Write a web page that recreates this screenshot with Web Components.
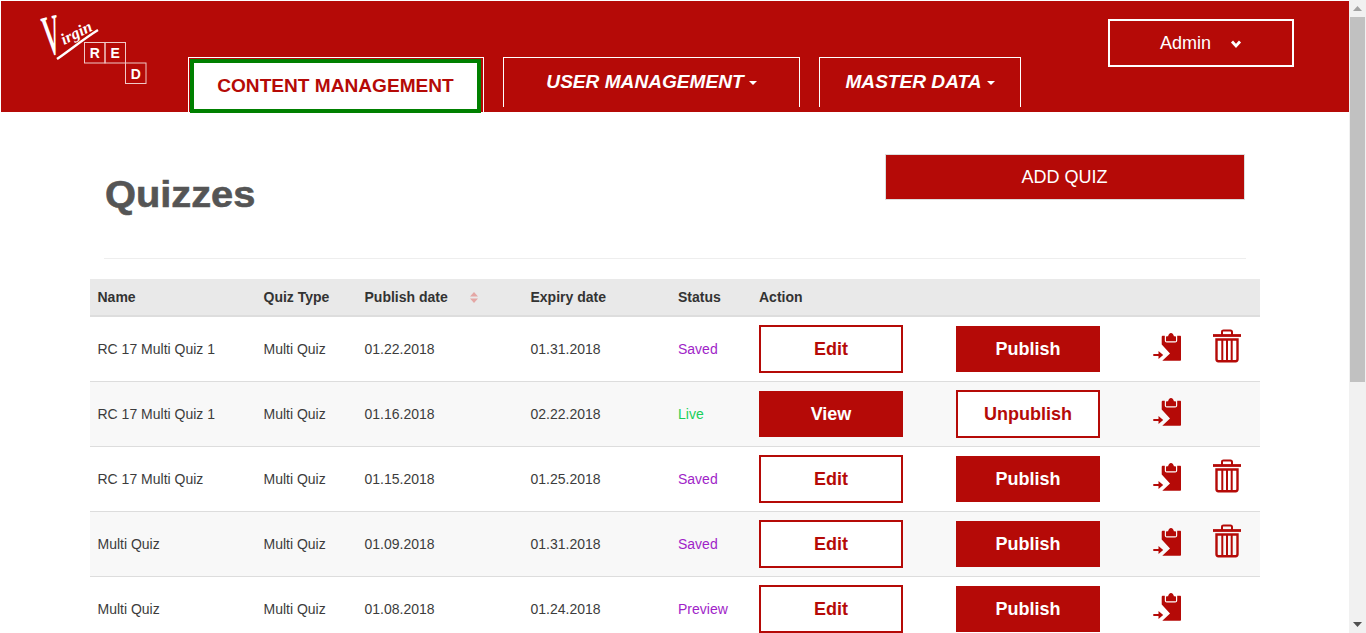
<!DOCTYPE html>
<html lang="en">
<head>
<meta charset="utf-8">
<title>Quizzes</title>
<style>
  html, body { margin: 0; height: 633px; overflow: hidden; background: #fff; }
  body { display: flex; font-family: "Liberation Sans", Arial, sans-serif; }
</style>
</head>
<body>
<app-shell>
  <app-header></app-header>
  <quiz-page></quiz-page>
</app-shell>
<fake-scrollbar></fake-scrollbar>

<script>
const RED = '#b50a07';

// Icons used by the rows
const ICON_CLIPBOARD = `
<svg xmlns="http://www.w3.org/2000/svg" width="30" height="32" viewBox="0 0 30 32" aria-hidden="true">
  <path fill="${RED}" d="M11 3.800h1.800V8.500c0 1.200.8 2 2 2h8.400c1.200 0 2-.8 2-2V3.800H28c.6 0 1 .4 1 1v23c0 .6-.4 1-1 1H10.300L18 21.500 9.700 12.500V5c0-.7.5-1.200 1.300-1.200z"/>
  <path fill="${RED}" d="M14 9.300V5.300c0-.6.4-1 1-1h1.100C16.400 2.300 17.600 1 19 1s2.600 1.300 2.900 3.300H23c.6 0 1 .4 1 1v4z"/>
  <path fill="${RED}" d="M1.300 22h5.200v-3l4.700 4-4.700 4v-3H1.300z"/>
</svg>`;

const ICON_TRASH = `
<svg xmlns="http://www.w3.org/2000/svg" width="28" height="34" viewBox="0 0 28 34" aria-hidden="true">
  <g fill="none" stroke="${RED}">
    <path stroke-width="2" d="M9 6V3c0-1 .6-1.600 1.600-1.600h6.800c1 0 1.600.6 1.600 1.600v3"/>
    <path stroke-width="2.800" d="M0 6.500h28"/>
    <path stroke-width="2.400" d="M3.500 10.500v19.800c0 1.200.7 1.900 1.900 1.900h17.200c1.200 0 1.900-.7 1.900-1.900V10.500z"/>
    <path stroke-width="2" d="M9.300 11v20M14 11v20M18.700 11v20"/>
  </g>
</svg>`;

class AppShell extends HTMLElement {
  constructor() {
    super();
    this.attachShadow({ mode: 'open' });
    this.shadowRoot.innerHTML = `
      <style>
        :host { display: block; width: 1349px; flex: none; }
      </style>
      <slot></slot>`;
  }
}

class FakeScrollbar extends HTMLElement {
  constructor() {
    super();
    this.attachShadow({ mode: 'open' });
    this.shadowRoot.innerHTML = `
      <style>
        :host { display: flex; flex-direction: column; width: 17px; height: 633px; flex: none; background: #f1f1f1; }
        .arrow { height: 17px; display: flex; align-items: center; justify-content: center; flex: none; }
        .thumb { height: 365px; margin-left: 1px; width: 15px; background: #c1c1c1; flex: none; }
        .track { flex: 1; }
      </style>
      <div class="arrow"><svg width="9" height="5" viewBox="0 0 9 5"><path d="M4.500 0L9 5H0z" fill="#a3a3a3"/></svg></div>
      <div class="thumb"></div>
      <div class="track"></div>
      <div class="arrow"><svg width="9" height="5" viewBox="0 0 9 5"><path d="M0 0h9L4.500 5z" fill="#505050"/></svg></div>`;
  }
}

// viewBox follows page coordinates, so the marks can be read off the screenshot
class VirginLogo extends HTMLElement {
  constructor() {
    super();
    this.attachShadow({ mode: 'open' });
    this.shadowRoot.innerHTML = `
      <style>
        :host { display: block; width: 187px; height: 100px; flex: none; }
        svg { display: block; }
        text { font-family: "Liberation Sans", Arial, sans-serif; }
        .script { font-family: "Liberation Serif", serif; font-style: italic; font-weight: 700; fill: #fff; }
      </style>
      <svg xmlns="http://www.w3.org/2000/svg" width="187" height="100" viewBox="1 1 187 100">
        <text class="script" transform="translate(48 56) rotate(-14) scale(.72 1.7)" font-size="34">V</text>
        <text class="script" transform="translate(64 45) rotate(-27)" font-size="16" textLength="33" lengthAdjust="spacingAndGlyphs">irgin</text>
        <path d="M57 59C70 50 85 38 98 30" fill="none" stroke="#fff" stroke-width="2.400"/>
        <g fill="none" stroke="#f0c9c8" stroke-width="1">
          <rect x="84.500" y="42.500" width="20.500" height="20.500"/>
          <rect x="105" y="42.500" width="20.500" height="20.500"/>
          <rect x="125.500" y="63" width="20.500" height="20.500"/>
        </g>
        <g fill="#fff" font-size="14" font-weight="700" text-anchor="middle">
          <text x="94.800" y="58">R</text>
          <text x="115.200" y="58">E</text>
          <text x="135.800" y="78.500">D</text>
        </g>
      </svg>`;
  }
}

class NavTab extends HTMLElement {
  constructor() {
    super();
    this.attachShadow({ mode: 'open' });
    this.shadowRoot.innerHTML = `
      <style>
        :host {
          display: flex; align-items: center; justify-content: center; box-sizing: border-box;
          height: 50px; padding-bottom: 1px; flex: none;
          border: 1px solid #fff; border-bottom: 0;
          color: #fff; font: italic 700 19.100px/1 "Liberation Sans", Arial, sans-serif;
        }
        :host([active]) {
          height: 56px; border-bottom: 0; padding: 1px 2px 0 1px; align-items: stretch;
          font-style: normal;
        }
        .inner { display: flex; align-items: center; justify-content: center; flex: 1; }
        :host([active]) .inner {
          background: #fff; color: ${RED}; border: 4px solid #008000; padding-bottom: 1px;
        }
        .caret {
          width: 0; height: 0; margin-left: 5px; margin-top: 2px;
          border-left: 4.500px solid transparent; border-right: 4.500px solid transparent; border-top: 4px solid #fff;
        }
      </style>
      <div class="inner"><slot></slot>${this.hasAttribute('dropdown') ? '<span class="caret"></span>' : ''}</div>`;
  }
}

class UserMenu extends HTMLElement {
  constructor() {
    super();
    this.attachShadow({ mode: 'open' });
    this.shadowRoot.innerHTML = `
      <style>
        :host {
          display: flex; align-items: center; box-sizing: border-box; flex: none;
          width: 186px; height: 48px; padding: 1px 0 0 50px; border: 2px solid #fff;
          color: #fff; font: 18px "Liberation Sans", Arial, sans-serif;
        }
        svg { margin-left: 19px; margin-top: 2px; }
      </style>
      <slot></slot>
      <svg width="12" height="9" viewBox="0 0 12 9"><path d="M2 1.500L6 6l4-4.500" fill="none" stroke="#fff" stroke-width="2.800"/></svg>`;
  }
}

class AppHeader extends HTMLElement {
  constructor() {
    super();
    this.attachShadow({ mode: 'open' });
    this.shadowRoot.innerHTML = `
      <style>
        :host {
          display: flex; align-items: flex-start; box-sizing: border-box;
          height: 111px; margin: 1px 0 0 1px; background: ${RED};
        }
        nav { display: flex; margin: 56px 0 0 0; align-items: flex-start; }
        nav-tab:nth-child(1) { width: 296px; margin-right: 19px; }
        nav-tab:nth-child(2) { width: 297px; margin-right: 19px; }
        nav-tab:nth-child(3) { width: 202px; }
        user-menu { margin: 18px 0 0 87px; }
      </style>
      <virgin-logo></virgin-logo>
      <nav>
        <nav-tab active>CONTENT MANAGEMENT</nav-tab>
        <nav-tab dropdown>USER MANAGEMENT</nav-tab>
        <nav-tab dropdown>MASTER DATA</nav-tab>
      </nav>
      <user-menu>Admin</user-menu>`;
  }
}

class ActionButton extends HTMLElement {
  constructor() {
    super();
    this.attachShadow({ mode: 'open' });
    this.shadowRoot.innerHTML = `
      <style>
        :host {
          display: flex; align-items: center; justify-content: center; box-sizing: border-box;
          width: 144px; height: 46px; background: ${RED}; color: #fff;
          font: 700 18px "Liberation Sans", Arial, sans-serif;
        }
        :host([outline]) { height: 48px; background: #fff; color: ${RED}; border: 2px solid ${RED}; }
      </style>
      <slot></slot>`;
  }
}

const COLUMNS = '166px 101px 166px 147.500px 81px 197px 197px 60px 1fr';

class QuizRow extends HTMLElement {
  setData({ name, type, publish, expiry, status, color, primary, secondary, trash }) {
    const first = primary === 'Edit' ? '<action-button outline>Edit</action-button>' : `<action-button>${primary}</action-button>`;
    const second = secondary === 'Unpublish' ? '<action-button outline>Unpublish</action-button>' : `<action-button>${secondary}</action-button>`;
    this.attachShadow({ mode: 'open' });
    this.shadowRoot.innerHTML = `
      <style>
        :host {
          display: grid; grid-template-columns: ${COLUMNS}; align-items: center; box-sizing: border-box;
          height: 65px; border-bottom: 1px solid #ddd;
          font: 14px "Liberation Sans", Arial, sans-serif; color: #3c3c3c;
        }
        :host(:nth-child(even)) { background: #f8f8f8; }
        .cell { padding-left: 8px; }
        .status { color: ${color}; }
        .icon { display: flex; }
        .clip { margin: -3px 0 0 0; padding-left: 7px; }
        .bin { margin: -7px 0 0 0; padding-left: 8px; }
      </style>
      <div class="cell">${name}</div>
      <div class="cell">${type}</div>
      <div class="cell">${publish}</div>
      <div class="cell">${expiry}</div>
      <div class="cell status">${status}</div>
      <div class="cell">${first}</div>
      <div class="cell">${second}</div>
      <div class="icon clip">${ICON_CLIPBOARD}</div>
      <div class="icon bin">${trash ? ICON_TRASH : ''}</div>`;
  }
}

class QuizTable extends HTMLElement {
  constructor() {
    super();
    this.attachShadow({ mode: 'open' });
    this.shadowRoot.innerHTML = `
      <style>
        :host { display: block; font: 14px "Liberation Sans", Arial, sans-serif; color: #333; }
        .head {
          display: grid; grid-template-columns: ${COLUMNS}; align-items: center; box-sizing: border-box;
          height: 38px; background: #e9e9e9; border-bottom: 2px solid #ddd; font-weight: 700; padding-bottom: 1px;
        }
        .head div { padding-left: 8px; }
        .sort { display: inline-block; vertical-align: -1px; margin-left: 22px; }
      </style>
      <div class="head">
        <div>Name</div>
        <div>Quiz Type</div>
        <div>Publish date<svg class="sort" width="8" height="11" viewBox="0 0 8 11"><path d="M4 0l4 4.500H0zM0 6.500h8L4 11z" fill="#e4a7a5"/></svg></div>
        <div>Expiry date</div>
        <div>Status</div>
        <div>Action</div>
      </div>
      <div id="rows"></div>`;

    const purple = '#a01fc8';
    const green = '#18cf5a';
    const rows = [
      { name: 'RC 17 Multi Quiz 1', type: 'Multi Quiz', publish: '01.22.2018', expiry: '01.31.2018', status: 'Saved', color: purple, primary: 'Edit', secondary: 'Publish', trash: true },
      { name: 'RC 17 Multi Quiz 1', type: 'Multi Quiz', publish: '01.16.2018', expiry: '02.22.2018', status: 'Live', color: green, primary: 'View', secondary: 'Unpublish', trash: false },
      { name: 'RC 17 Multi Quiz', type: 'Multi Quiz', publish: '01.15.2018', expiry: '01.25.2018', status: 'Saved', color: purple, primary: 'Edit', secondary: 'Publish', trash: true },
      { name: 'Multi Quiz', type: 'Multi Quiz', publish: '01.09.2018', expiry: '01.31.2018', status: 'Saved', color: purple, primary: 'Edit', secondary: 'Publish', trash: true },
      { name: 'Multi Quiz', type: 'Multi Quiz', publish: '01.08.2018', expiry: '01.24.2018', status: 'Preview', color: purple, primary: 'Edit', secondary: 'Publish', trash: false }
    ];
    const box = this.shadowRoot.getElementById('rows');
    rows.forEach((r) => {
      const row = document.createElement('quiz-row');
      row.setData(r);
      box.appendChild(row);
    });
  }
}

class QuizPage extends HTMLElement {
  constructor() {
    super();
    this.attachShadow({ mode: 'open' });
    this.shadowRoot.innerHTML = `
      <style>
        :host { display: block; width: 1170px; margin: 0 auto; }
        .top {
          display: flex; justify-content: space-between; align-items: flex-start; box-sizing: border-box;
          height: 147px; margin: 0 14px 20px; padding: 42px 1px 0; border-bottom: 1px solid #eee;
        }
        h1 {
          margin: 21px 0 0; font: 700 36px/1.1 "Liberation Sans", Arial, sans-serif; color: #555;
          transform: scaleX(1.105); transform-origin: left center; -webkit-text-stroke: .6px #555;
        }
        .add {
          display: flex; align-items: center; justify-content: center; box-sizing: border-box;
          width: 360px; height: 46px; background: ${RED}; border: 1px solid #ddd; color: #fff;
          font: 18px "Liberation Sans", Arial, sans-serif;
        }
      </style>
      <div class="top">
        <h1>Quizzes</h1>
        <div class="add">ADD QUIZ</div>
      </div>
      <quiz-table></quiz-table>`;
  }
}

customElements.define('action-button', ActionButton);
customElements.define('quiz-row', QuizRow);
customElements.define('quiz-table', QuizTable);
customElements.define('quiz-page', QuizPage);
customElements.define('virgin-logo', VirginLogo);
customElements.define('nav-tab', NavTab);
customElements.define('user-menu', UserMenu);
customElements.define('app-header', AppHeader);
customElements.define('app-shell', AppShell);
customElements.define('fake-scrollbar', FakeScrollbar);
</script>
</body>
</html>
